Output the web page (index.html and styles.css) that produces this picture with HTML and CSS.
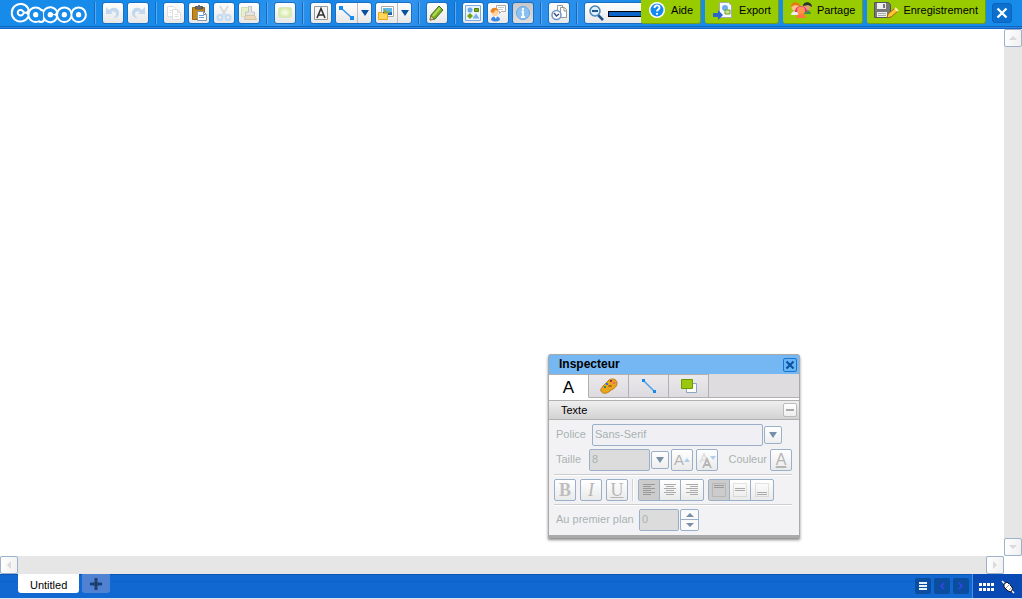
FILE: index.html
```
<!DOCTYPE html>
<html lang="fr">
<head>
<meta charset="utf-8">
<title>Cacoo</title>
<link rel="stylesheet" href="styles.css">
</head>
<body>
<header class="toolbar">
  <a class="logo" href="#" aria-label="Cacoo">
    <svg width="78" height="24" viewBox="0 0 78 24" fill="none" stroke-linecap="round">
      <g stroke="#fff" stroke-width="8">
        <path d="M15.500 8.700A5.800 5.800 0 1 0 15.500 14.700"/>
        <circle cx="25.700" cy="13.700" r="4.300"/><path d="M31 12v6"/>
        <path d="M44 11.200A4.500 4.500 0 1 0 44 16.200"/>
        <circle cx="54.300" cy="13.700" r="4.300"/><circle cx="68.600" cy="13.700" r="4.300"/>
      </g>
      <g stroke="#188be8" stroke-width="4">
        <path d="M15.500 8.700A5.800 5.800 0 1 0 15.500 14.700"/>
        <circle cx="25.700" cy="13.700" r="4.300"/><path d="M31 12v6"/>
        <path d="M44 11.200A4.500 4.500 0 1 0 44 16.200"/>
        <circle cx="54.300" cy="13.700" r="4.300"/><circle cx="68.600" cy="13.700" r="4.300"/>
      </g>
      <g fill="#fff"><circle cx="25.700" cy="13.700" r="2.600"/><circle cx="40.300" cy="13.700" r="2.600"/><circle cx="54.300" cy="13.700" r="2.600"/><circle cx="68.600" cy="13.700" r="2.600"/></g>
    </svg>
  </a>
  <span class="sep"></span>
  <button class="tool" aria-label="Annuler"><svg viewBox="0 0 20 20"><path d="M3 4v7h7L8 9c3-1 5 0 5 2s-1 3-3 4c4 0 6-2 6-5 0-5-6-7-10-3z" fill="#c3d8ed"/></svg></button>
  <button class="tool" aria-label="Rétablir"><svg viewBox="0 0 20 20"><path d="M17 4v7h-7l2-2c-3-1-5 0-5 2s1 3 3 4c-4 0-6-2-6-5 0-5 6-7 10-3z" fill="#c3d8ed"/></svg></button>
  <span class="sep"></span>
  <button class="tool" aria-label="Copier"><svg viewBox="0 0 20 20" fill="#fff" stroke="#dedede"><path d="M3.500 3.500h6l2 2v8h-8z"/><path d="M8.500 6.500h5l3 3v7h-8zM13.500 6.500v3h3M10.500 11.500h4M10.500 13.500h4M5.500 7.500h2M5.500 9.500h2"/></svg></button>
  <button class="tool" aria-label="Coller"><svg viewBox="0 0 20 20"><path d="M3.500 4.500h12v12h-12z" fill="#c88711" stroke="#946615"/><path d="M6.500 6V3.500h2l1-1h1l1 1h2V6z" fill="#666" stroke="#555"/><path d="M8.500 8.500h6l3 3v6h-9z" fill="#fff" stroke="#8798a8"/><path d="M10 12.500h5M10 14.500h5" stroke="#63a1dd"/><path d="M14.500 8.500v3h3" fill="none" stroke="#8798a8"/></svg></button>
  <button class="tool" aria-label="Couper"><svg viewBox="0 0 20 20" fill="none"><path d="M6 3l6 10M14 3L8 13" stroke="#dadada" stroke-width="2"/><circle cx="6" cy="14.500" r="2.500" stroke="#c1dbf4" stroke-width="2"/><circle cx="14" cy="14.500" r="2.500" stroke="#c1dbf4" stroke-width="2"/></svg></button>
  <button class="tool" aria-label="Copier le style"><svg viewBox="0 0 20 20"><path d="M2.500 4.500h9v9h-9z" fill="#e6f1c9" stroke="#d4dfb5"/><path d="M9.500 9V3.500h3V9h3v4h-9V9z" fill="#e4e4e4" stroke="#c4c4c4"/><path d="M6.500 12.500h9l2 4h-12z" fill="#ead9bd" stroke="#d3c4a9"/></svg></button>
  <span class="sep"></span>
  <button class="tool" aria-label="Forme"><svg viewBox="0 0 20 20"><defs><radialGradient id="leaf"><stop offset="0" stop-color="#fbfff0"/><stop offset="1" stop-color="#d6e8a8"/></radialGradient></defs><rect x="3.500" y="4.500" width="13" height="10" rx="2" fill="url(#leaf)" stroke="#dae7bf"/></svg></button>
  <span class="sep"></span>
  <button class="tool" aria-label="Texte"><svg viewBox="0 0 20 20" fill="none"><path d="M3.500 3.500h13v13h-13z" fill="#f6f6f6" stroke="#999"/><path d="M6 15l4-9.500L14 15M7.500 12h5" stroke="#333" stroke-width="1.600"/></svg></button>
  <div class="split"><button class="part" aria-label="Ligne"><svg viewBox="0 0 20 20"><path d="M4 5l11 10" stroke="#3797e5" stroke-width="1.500"/><path d="M2 3h4v4H2zM13 13h4v4h-4z" fill="#168aed"/></svg></button><button class="part arrow" aria-label="Types de lignes"><svg viewBox="0 0 12 20"><path d="M2 7h8l-4 6z" fill="#07509f"/></svg></button></div>
  <div class="split"><button class="part" aria-label="Image"><svg viewBox="0 0 20 20"><path d="M4.500 3.500h12v10h-12z" fill="#fff" stroke="#aaa"/><path d="M6 5h9v7H6z" fill="#64b9ec"/><path d="M6 9l5 1 4-1v3H6z" fill="#1765b8"/><path d="M7 6l4 3 2-2-1 3-5 1z" fill="#83a63d"/><path d="M1.500 9.500h4l1 1h4v6h-9z" fill="#ffd75e" stroke="#efa918"/></svg></button><button class="part arrow" aria-label="Sources d’images"><svg viewBox="0 0 12 20"><path d="M2 7h8l-4 6z" fill="#07509f"/></svg></button></div>
  <span class="sep"></span>
  <button class="tool" aria-label="Crayon"><svg viewBox="0 0 20 20"><path d="M3 17l1-5 8-9 4 4-8 9z" fill="#77ad20" stroke="#44691b"/><path d="M6 13l7-8" stroke="#b2d957" stroke-width="2"/><path d="M3 17l1-4 3 3z" fill="#eac892" stroke="#765d36" stroke-width=".5"/></svg></button>
  <span class="sep"></span>
  <button class="tool" aria-label="Stencils"><svg viewBox="0 0 20 20"><path d="M2.500 2.500h15v15h-15z" fill="#e9f3fd" stroke="#7babe0"/><circle cx="7" cy="7" r="2.500" fill="#6ca9e9"/><path d="M11.500 5.500h4v3h-4z" fill="#7fac14" stroke="#597e09"/><path d="M7 10l3 3-3 3-3-3z" fill="#75a30a"/><path d="M13 10.500l3.500 5h-7z" fill="#79ace9"/></svg></button>
  <button class="tool" aria-label="Discussion"><svg viewBox="0 0 20 20"><path d="M8.500 2.500h9v6h-4l-2 2v-2h-3z" fill="#fff" stroke="#aaa"/><path d="M10 4.500h6M10 6.500h5" stroke="#ccc"/><circle cx="7" cy="9.500" r="3.500" fill="#ffd2a0"/><path d="M2.500 9c0-6 8-5 8-1l-3-1-2 3z" fill="#ef861d"/><path d="M3 17c0-5 9-5 9 0-3 2-6 2-9 0z" fill="#3e86e4"/><path d="M6 13h3l-1 3z" fill="#fff"/></svg></button>
  <button class="tool pressed" aria-label="Inspecteur" aria-pressed="true"><svg viewBox="0 0 20 20"><circle cx="10" cy="10" r="6.500" fill="#8ac1f1" stroke="#64a8e6"/><path d="M10 5v2M8.500 8.500H10v5M8 14h4" fill="none" stroke="#fff" stroke-width="1.800"/></svg></button>
  <span class="sep"></span>
  <button class="tool" aria-label="Historique"><svg viewBox="0 0 20 20" fill="#fff" stroke="#999"><path d="M8.500 2.500h5v9h-5z"/><path d="M11.500 4.500h4l2 2v8h-6zM15 5v3h3"/><circle cx="7.500" cy="12" r="4.500" stroke="#6c96ca" stroke-width="1.500"/><path d="M5 10l2.500 3L10 11" fill="none" stroke="#3f4e91" stroke-width="1.500"/></svg></button>
  <span class="sep"></span>
  <div class="zoom">
    <button class="part" aria-label="Zoom arrière"><svg viewBox="0 0 20 20" fill="none"><path d="M12 12l5 5" stroke="#1f558c" stroke-width="2.500"/><circle cx="9" cy="8" r="5" fill="#ddeffc" stroke="#4583b5" stroke-width="1.500"/><path d="M6 8h6" stroke="#1f558c" stroke-width="2"/></svg></button>
    <input class="zoom-range" type="range" aria-label="Zoom" value="100">
  </div>
  <nav class="actions">
    <button class="action"><svg viewBox="0 0 20 20"><circle cx="10" cy="10" r="8" fill="#fff"/><circle cx="10" cy="10" r="6.500" fill="#168af0"/><path d="M7.500 8c0-3.500 5-3.500 5-.5 0 2-2.500 2-2.500 4M10 13v1.800" fill="none" stroke="#fff" stroke-width="1.800"/></svg>Aide</button>
    <button class="action export"><svg viewBox="0 0 20 20"><path d="M6.500 2.500h9l3 3v12h-12z" fill="#f8faff" stroke="#aaa"/><circle cx="12" cy="8" r="3" fill="#70ade9"/><path d="M12 10h5v4h-5z" fill="#cde69c" stroke="#67a317"/><path d="M0 13h5v-3l5 5-5 5v-3H0z" fill="#2a65cf"/></svg>Export</button>
    <button class="action share"><svg viewBox="0 0 24 20"><circle cx="6" cy="7" r="3.500" fill="#ffc384"/><path d="M2 7c0-6 8-6 9-1L6 5z" fill="#e87516"/><path d="M2 15c0-5 8-5 8 0z" fill="#eee"/><circle cx="18" cy="7" r="3.500" fill="#dda26c"/><path d="M14 6c0-5 9-5 9 1l-4-2z" fill="#27332c"/><path d="M14 14c0-5 8-5 8 0z" fill="#3c9443"/><path d="M6 12c0-8 12-8 12 0z" fill="#ed2798"/><circle cx="12" cy="10.500" r="4" fill="#ff944c"/><path d="M7 18c0-6 10-6 10 0z" fill="#ff7840"/></svg>Partage</button>
    <button class="action save"><svg viewBox="0 0 26 20"><path d="M1.500 2.500h14l2 2v13h-16z" fill="#777" stroke="#555"/><path d="M4 3h9v6H4zM4 12h10v5H4z" fill="#eee"/><path d="M10 4h2v4h-2z" fill="#777"/><path d="M5 13.500h8M5 15.500h8" stroke="#aaa"/><path d="M14 18l1-4 7-6 3 3-7 6z" fill="#ffc62e" stroke="#986713"/><path d="M22 8l3 3" stroke="#fff1aa" stroke-width="2"/></svg>Enregistrement</button>
    <button class="quit" aria-label="Fermer"><svg viewBox="0 0 20 20"><path d="M5 5l10 10M15 5L5 15" stroke="#fff" stroke-width="2.500"/></svg></button>
  </nav>
</header>

<main class="workspace">
  <div class="canvas"></div>
  <div class="scroll vertical">
    <button class="scroll-button" aria-label="Haut"><svg viewBox="0 0 16 16"><path d="M4 10h8L8 6z"/></svg></button>
    <button class="scroll-button" aria-label="Bas"><svg viewBox="0 0 16 16"><path d="M4 6h8l-4 4z"/></svg></button>
  </div>
  <div class="scroll">
    <button class="scroll-button" aria-label="Gauche"><svg viewBox="0 0 16 16"><path d="M10 4v8L6 8z"/></svg></button>
    <button class="scroll-button" aria-label="Droite"><svg viewBox="0 0 16 16"><path d="M6 4v8l4-4z"/></svg></button>
  </div>

  <section class="inspector" aria-label="Inspecteur">
    <header class="title"><h1>Inspecteur</h1><button aria-label="Fermer l’inspecteur"><svg viewBox="0 0 12 12"><path d="M2.500 2.500l7 7M9.500 2.500l-7 7" stroke="#07519d" stroke-width="2"/></svg></button></header>
    <div class="tabs">
      <button class="tab active" aria-label="Texte">A</button>
      <button class="tab" aria-label="Couleurs"><svg viewBox="0 0 18 18"><path d="M3 9l6-6c3-2 8-1 8 3 0 5-5 6-7 8-3 3-8 3-9 0-1-2 1-3 2-5z" fill="#e9a51b" stroke="#ba8017"/><path d="M10 3h2v2h-2z" fill="#9f3044"/><path d="M13 5h2v2h-2z" fill="#f05e8d"/><path d="M6 6h2v2H6z" fill="#297ae0"/><path d="M4 9h2v2H4z" fill="#468647"/><ellipse cx="10" cy="9" rx="2" ry="1" fill="#9d6915"/></svg></button>
      <button class="tab" aria-label="Ligne"><svg viewBox="0 0 18 18"><path d="M4 4l11 11" stroke="#4a9fe8" stroke-width="1.500"/><path d="M2 2h3v3H2zM13 13h3v3h-3z" fill="#168aed"/></svg></button>
      <button class="tab" aria-label="Disposition"><svg viewBox="0 0 18 18"><path d="M6.500 6.500h10v9h-10z" fill="#fff" stroke="#88a7c7"/><path d="M1.500 2.500h11v9h-11z" fill="#9bc711" stroke="#6c9b00"/></svg></button>
    </div>
    <div class="section"><h2>Texte</h2><button aria-label="Réduire"><svg viewBox="0 0 12 12"><path d="M2 6h8" stroke="#aaa" stroke-width="2"/></svg></button></div>
    <form class="form">
      <div class="row">
        <label for="font">Police</label>
        <input class="font" id="font" type="text" value="Sans-Serif" disabled>
        <button type="button" class="drop" aria-label="Choisir la police" disabled><svg viewBox="0 0 16 16"><path d="M4 5h8l-4 6z"/></svg></button>
      </div>
      <div class="row">
        <label for="size">Taille</label>
        <input class="size filled" id="size" type="text" value="8" disabled>
        <button type="button" class="drop" aria-label="Choisir la taille" disabled><svg viewBox="0 0 16 16"><path d="M4 5h8l-4 6z"/></svg></button>
        <button type="button" class="format grow" aria-label="Agrandir" disabled>A<svg viewBox="0 0 6 6"><path d="M0 5h6L3 1z"/></svg></button>
        <button type="button" class="format shrink" aria-label="Réduire le texte" disabled><svg viewBox="0 0 20 20" fill="none"><path d="M3 13L7 4l4 9M4 10h6" stroke="#ddd" stroke-width="1.500"/><path d="M6 18l4-9 4 9M7 15h6" stroke="#b5b5b5" stroke-width="1.800"/><path d="M13 6h6l-3 4z" fill="#b2cde9"/></svg></button>
        <label class="color-label" for="color">Couleur</label>
        <button type="button" id="color" class="format color" disabled>A</button>
      </div>
      <div class="row styles">
        <button type="button" class="format serif bold" disabled>B</button>
        <button type="button" class="format serif italic" disabled>I</button>
        <button type="button" class="format serif underline" disabled>U</button>
        <span class="divider"></span>
        <div class="group">
          <button type="button" class="on" aria-label="Aligner à gauche" disabled><svg viewBox="0 0 20 20"><path d="M4 4.500h12M4 6.500h8M4 8.500h12M4 10.500h8M4 12.500h12M4 14.500h8"/></svg></button>
          <button type="button" aria-label="Centrer" disabled><svg viewBox="0 0 20 20"><path d="M4 4.500h12M6 6.500h8M4 8.500h12M6 10.500h8M4 12.500h12M6 14.500h8"/></svg></button>
          <button type="button" aria-label="Aligner à droite" disabled><svg viewBox="0 0 20 20"><path d="M4 4.500h12M8 6.500h8M4 8.500h12M8 10.500h8M4 12.500h12M8 14.500h8"/></svg></button>
        </div>
        <div class="group">
          <button type="button" class="on" aria-label="En haut" disabled><svg viewBox="0 0 20 20"><path d="M3.500 3.500h13v13h-13z" opacity=".4"/><path d="M5 5.500h10M5 7.500h10"/></svg></button>
          <button type="button" aria-label="Au milieu" disabled><svg viewBox="0 0 20 20"><path d="M3.500 3.500h13v13h-13z" opacity=".3"/><path d="M5 8.500h10M5 10.500h10"/></svg></button>
          <button type="button" aria-label="En bas" disabled><svg viewBox="0 0 20 20"><path d="M3.500 3.500h13v13h-13z" opacity=".3"/><path d="M5 12.500h10M5 14.500h10"/></svg></button>
        </div>
      </div>
      <div class="row front">
        <label for="front">Au premier plan</label>
        <input class="order filled" id="front" type="text" value="0" disabled>
        <div class="spinner"><button type="button" aria-label="Augmenter" disabled><svg viewBox="0 0 8 8"><path d="M0 6h8L4 2z"/></svg></button><button type="button" aria-label="Diminuer" disabled><svg viewBox="0 0 8 8"><path d="M0 2h8L4 6z"/></svg></button></div>
      </div>
    </form>
  </section>
</main>

<footer class="sheets">
  <button class="sheet">Untitled</button>
  <button class="add" aria-label="Ajouter une feuille"><svg viewBox="0 0 12 12"><path d="M6 0v12M0 6h12" stroke="#1c3e70" stroke-width="3"/></svg></button>
  <div class="sheet-nav">
    <button aria-label="Liste"><svg viewBox="0 0 16 16"><path d="M4 5h8M4 8h8M4 11h8" stroke="#e7f2fc" stroke-width="2"/></svg></button>
    <button aria-label="Feuille précédente"><svg viewBox="0 0 16 16" fill="none"><path d="M10 5L7 8l3 3" stroke="#3b43ee" stroke-width="1.500"/></svg></button>
    <button aria-label="Feuille suivante"><svg viewBox="0 0 16 16" fill="none"><path d="M6 5l3 3-3 3" stroke="#3b43ee" stroke-width="1.500"/></svg></button>
  </div>
  <div class="status">
    <svg class="dots" viewBox="0 0 16 8"><path d="M0 1.500h16M0 6.500h16" stroke="#fff" stroke-width="3" stroke-dasharray="3 1"/></svg>
    <svg class="plug" viewBox="0 0 14 14"><path d="M1 1l3 3M10 10l3 3" stroke="#fff" stroke-width="1.500"/><path d="M3 4l3-2 6 6-2 4-3-1-4-4z" fill="#fff" stroke="#111"/><path d="M5 8l4-4M8 10l3-3" stroke="#999"/></svg>
  </div>
</footer>
</body>
</html>
```

FILE: styles.css
```
* { box-sizing: border-box; }
html, body { height: 100%; }
body {
  margin: 0;
  display: flex;
  flex-direction: column;
  overflow: hidden;
  background: #fff;
  color: #000;
  font: 11px/14px "Liberation Sans", Arial, sans-serif;
}
button, input { font: inherit; margin: 0; padding: 0; }
button { display: flex; align-items: center; justify-content: center; border: 0; color: inherit; flex: none; }
svg { display: block; flex: none; }
h1, h2 { margin: 0; }

.toolbar {
  position: relative;
  flex: none;
  display: flex;
  align-items: flex-start;
  gap: 3px;
  height: 29px;
  padding-top: 2px;
  background: linear-gradient(105deg, #168bea 0 24%, #3999ee 28%, #1785e5 32%, #3294ed 40%, #1680e0 44%, #3091eb 52%, #168bea 65%);
  box-shadow: inset 0 -1px #0d64c2, inset 0 -2px #2a86e0, inset 0 -3px #1064bd;
}
.logo { width: 88px; padding-left: 10px; flex: none; }
.logo svg { margin-top: -1px; }
.sep { flex: none; width: 2px; height: 22px; margin: 0 3px; background: #1669c3; border-right: 1px solid #58aaf3; }
.tool, .split, .zoom {
  flex: none;
  height: 22px;
  border: 1px solid #1b6fc3;
  border-radius: 3px;
  background: linear-gradient(#fff, #e7e7e7);
}
.tool { width: 22px; }
.tool svg, .part svg { width: 20px; height: 20px; }
.pressed { background: linear-gradient(#c8c8c8, #dedede); }
.split { display: flex; width: 37px; }
.part { background: none; width: 21px; }
.part.arrow { width: 14px; border-left: 1px solid #bbb; }
.part.arrow svg { width: 12px; }
.zoom { display: flex; align-items: center; width: 116px; }
.zoom-range { appearance: none; flex: 1; min-width: 0; height: 6px; margin: 1px 4px 0 2px; background: #0d64c9; border: 1px solid #000; }
.zoom-range::-webkit-slider-thumb { appearance: none; width: 4px; height: 4px; background: #0d64c9; }

.actions { position: absolute; top: 0; right: 10px; display: flex; gap: 4px; align-items: flex-start; }
.action {
  gap: 4px;
  height: 24px;
  padding: 0 7px 3px 6px;
  border: solid #6f9c18;
  border-width: 0 1px 1px 0;
  border-radius: 0 0 3px 3px;
  background: #9c0;
}
.action svg { width: 20px; height: 20px; }
.action.export { gap: 6px; padding-left: 8px; }
.action.share svg { width: 24px; }
.action.save svg { width: 26px; }
.quit { width: 20px; height: 20px; margin: 3px 0 0 2px; border: 1px solid #0c63bd; border-radius: 3px; background: #0d70ce; }
.quit svg { width: 18px; height: 18px; }

.workspace { position: relative; flex: 1; min-height: 0; display: grid; grid-template: minmax(0, 1fr) 18px / minmax(0, 1fr) 18px; }
.scroll { display: flex; justify-content: space-between; background: #e6e6e6; }
.vertical { flex-direction: column; }
.scroll-button { width: 18px; height: 18px; border: 1px solid #9bb2ca; border-radius: 2px; background: linear-gradient(100deg, #fff, #f0f0f0); }
.scroll-button svg { width: 16px; height: 16px; fill: #dadada; }

.inspector {
  position: absolute;
  top: 325px;
  left: 548px;
  width: 252px;
  border: 1px solid #aaa;
  border-bottom: 3px solid #aaa;
  border-radius: 3px 3px 0 0;
  background: #f2f2f5;
  box-shadow: 0 2px 3px #888;
}
.title { display: flex; align-items: center; justify-content: space-between; height: 19px; padding: 0 2px 0 10px; background: #74b7f3; }
.title h1 { padding-bottom: 2px; font-size: 12px; line-height: 16px; }
.title button { width: 14px; height: 14px; border: 1px solid #1976cc; border-radius: 2px; background: #69b4f5; }
.title svg, .section svg { width: 12px; height: 12px; }
.tabs { display: flex; height: 27px; padding-bottom: 2px; border-bottom: 1px solid #b0b0b0; background: linear-gradient(#dfdce0 0 23px, #b0b0b0 23px 24px, #fff 24px); }
.tab { width: 40px; height: 24px; border: solid #b0b0b0; border-width: 1px 1px 1px 0; background: linear-gradient(#ece9ed, #dedbe0); }
.tab.active { padding-top: 3px; border-bottom-color: #fff; background: #fff; font-size: 17px; }
.tab svg { width: 18px; height: 18px; }
.section { display: flex; align-items: center; justify-content: space-between; height: 19px; padding: 0 2px 0 12px; border-bottom: 1px solid #b0b0b0; background: linear-gradient(#efefef, #d2d2d2); }
.section h2 { font-size: 11px; font-weight: normal; }
.section button { width: 14px; height: 14px; border: 1px solid #bbb; border-radius: 2px; background: linear-gradient(#fff, #eee); }

.form { display: flex; flex-direction: column; margin: 0; padding: 4px 7px 4px 5px; color: #a9b2b2; }
.row { display: flex; align-items: center; gap: 3px; height: 25px; padding-bottom: 3px; }
.row label { width: 33px; padding: 0 0 2px 2px; flex: none; white-space: nowrap; }
.row input { height: 22px; border: 1px solid #9ab0c8; border-radius: 2px; background: #f0f0f4; color: #a9b2b2; padding: 0 2px 2px; }
.row .filled { background: #dcdcdc; }
.row .font { width: 171px; margin-left: 2px; }
.row .size { width: 61px; margin-left: -1px; }
.drop { width: 18px; height: 18px; margin-left: -2px; border: 1px solid #9ab0c8; border-radius: 2px; background: linear-gradient(#fff, #eee); }
.drop svg { width: 16px; height: 16px; fill: #7790a8; }
.format { width: 22px; height: 22px; border: 1px solid #9ab0c8; border-radius: 2px; background: linear-gradient(#fff, #eaeaea); color: #b5b5b5; }
.grow { font-size: 15px; margin-left: -1px; }
.grow svg { width: 6px; height: 6px; fill: #b2cde9; }
.shrink svg { width: 20px; height: 20px; }
.row .color-label { width: auto; margin-left: auto; }
.color { font-size: 16px; text-decoration: underline; text-decoration-thickness: 2px; }
.styles { height: 31px; gap: 4px; padding: 0; border: solid #cdcdcd; border-width: 1px 0; box-shadow: inset 0 1px #fff, 0 1px #fff; }
.serif { font-family: "Liberation Serif", "Times New Roman", serif; font-size: 18px; }
.bold { color: #bebebe; font-weight: bold; }
.italic { font-style: italic; }
.underline { text-decoration: underline; }
.divider { width: 2px; height: 22px; background: #d0d0d0; border-right: 1px solid #fff; }
.group { display: flex; height: 22px; border: 1px solid #9ab0c8; border-radius: 2px; background: linear-gradient(#fff, #eaeaea); }
.group button { width: 21px; background: none; border-right: 1px solid #9ab0c8; }
.group button:last-child { width: 22px; border-right: 0; }
.group .on { background: #ccc; }
.group svg { width: 20px; height: 20px; fill: none; stroke: #aaa; }
.group .on svg { stroke: #999; }
.front { height: 26px; padding: 4px 0 0; gap: 1px; }
.front label { width: 84px; }
.row .order { width: 40px; }
.spinner { display: flex; flex-direction: column; width: 19px; height: 22px; border: 1px solid #9ab0c8; border-radius: 2px; background: #fafafa; }
.spinner button { height: 10px; background: none; }
.spinner button:first-child { border-bottom: 1px solid #9ab0c8; }
.spinner svg { width: 8px; height: 8px; fill: #7790a8; }

.sheets { flex: none; display: flex; align-items: flex-start; height: 25px; padding-left: 18px; gap: 3px; background: linear-gradient(#0b57b5 0 1px, #1068d0 1px 7px, #0d62c7 7px 8px, #1068d0 8px); border-bottom: 1px solid #d5e4f5; }
.sheet { height: 19px; padding: 2px 12px 0; border-radius: 0 0 3px 3px; background: #fff; }
.add { width: 28px; height: 19px; border-radius: 0 0 3px 3px; background: #4f82d2; }
.add svg { width: 12px; height: 12px; }
.sheet-nav { display: flex; gap: 3px; margin: 4px 0 0 auto; }
.sheet-nav button { width: 16px; height: 16px; border-radius: 2px; background: #0b4e9f; }
.sheet-nav svg { width: 16px; height: 16px; }
.status { display: flex; align-items: center; align-self: stretch; gap: 6px; width: 50px; padding: 2px 7px 0 6px; border-left: 1px solid #4c8ee0; background: #0849b4; }
.dots { width: 16px; height: 8px; }
.plug { width: 14px; height: 14px; }
```
